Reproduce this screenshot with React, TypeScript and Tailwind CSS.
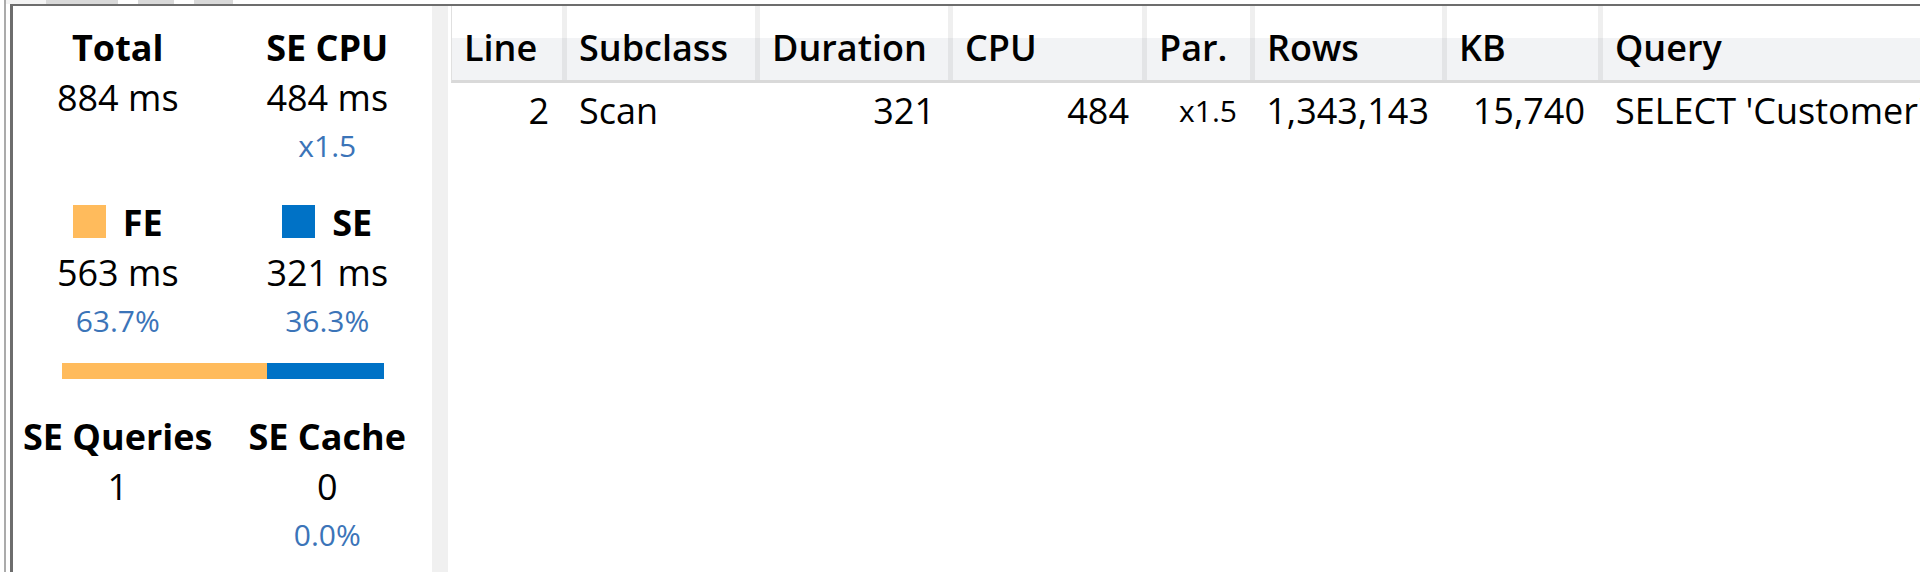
import React from "react";

type Col = {
  name: string;
  w: string;
  val: string;
  right: boolean;
  small?: boolean;
  last?: boolean;
};

const cols: Col[] = [
  { name: "Line", w: "w-[115px]", val: "2", right: true },
  { name: "Subclass", w: "w-[193px]", val: "Scan", right: false },
  { name: "Duration", w: "w-[193px]", val: "321", right: true },
  { name: "CPU", w: "w-[194px]", val: "484", right: true },
  { name: "Par.", w: "w-[108px]", val: "x1.5", right: true, small: true },
  { name: "Rows", w: "w-[192px]", val: "1,343,143", right: true },
  { name: "KB", w: "w-[156px]", val: "15,740", right: true },
  {
    name: "Query",
    w: "flex-1 min-w-0",
    val: "SELECT 'Customer'[CustomerKey], 'Customer'[Name] FROM 'Customer';",
    right: false,
    last: true,
  },
];

function LeftPanel() {
  const title = "leading-[50px] text-[36px] font-bold text-black";
  const value = "leading-[50px] text-[36px] text-black";
  const sub = "h-[46px] leading-[46px] text-[30px] text-[#3b74b8]";
  return (
    <div className="w-[419px] shrink-0 flex flex-col pt-[17px]">
      <div className="grid grid-cols-2 text-center">
        <div className={title}>Total</div>
        <div className={title}>SE CPU</div>
        <div className={value}>884 ms</div>
        <div className={value}>484 ms</div>
        <div className={sub}></div>
        <div className={sub}>x1.5</div>
      </div>
      <div className="grid grid-cols-2 text-center mt-[29px]">
        <div className={`${title} flex items-center justify-center gap-[17px]`}>
          <span className="w-[33px] h-[33px] bg-[#ffbb5c] mt-[-3px]" />
          <span>FE</span>
        </div>
        <div className={`${title} flex items-center justify-center gap-[17px]`}>
          <span className="w-[33px] h-[33px] bg-[#0072c6] mt-[-3px]" />
          <span>SE</span>
        </div>
        <div className={value}>563 ms</div>
        <div className={value}>321 ms</div>
        <div className={sub}>63.7%</div>
        <div className={sub}>36.3%</div>
      </div>
      <div className="mt-[19px] mx-auto w-[322px] h-[16px] flex">
        <div className="w-[205px] bg-[#ffbb5c]" />
        <div className="flex-1 bg-[#0072c6]" />
      </div>
      <div className="grid grid-cols-2 text-center mt-[33px]">
        <div className={`${title} whitespace-nowrap`}>SE Queries</div>
        <div className={`${title} whitespace-nowrap`}>SE Cache</div>
        <div className={value}>1</div>
        <div className={value}>0</div>
        <div className={sub}></div>
        <div className={sub}>0.0%</div>
      </div>
    </div>
  );
}

function Table() {
  return (
    <div className="flex-1 min-w-0 flex flex-col pl-[3px]">
      <div className="flex h-[77px] border-l border-[#e0e0e0] border-b-[3px] border-b-[#d9d9d9] bg-[linear-gradient(to_bottom,#ffffff_0px,#ffffff_32px,#f2f3f5_32px,#f2f3f5_100%)]">
        {cols.map((c) => (
          <div key={c.name} className={`${c.w} shrink-0 flex h-full`}>
            <div className="flex-1 min-w-0 pl-[12px] pt-[17px] leading-[50px] text-[36px] font-semibold text-black whitespace-nowrap">
              {c.name}
            </div>
            {!c.last && (
              <div className="w-[5px] h-full bg-[linear-gradient(to_bottom,#efefef_0px,#efefef_32px,#e3e4e6_32px,#e3e4e6_100%)]" />
            )}
          </div>
        ))}
      </div>
      <div className="flex pt-[3px] border-l border-white">
        {cols.map((c) => (
          <div
            key={c.name}
            className={`${c.w} shrink-0 h-[50px] flex items-center overflow-hidden whitespace-nowrap text-black ${
              c.right ? "justify-end pr-[18px]" : "justify-start pl-[12px]"
            } ${c.small ? "text-[30px] leading-[50px]" : "text-[36px] leading-[50px]"}`}
          >
            {c.val}
          </div>
        ))}
      </div>
    </div>
  );
}

export default function App() {
  return (
    <div className="w-[1920px] h-[572px] bg-white overflow-hidden flex font-['Open_Sans','Noto_Sans',sans-serif]">
      <div className="w-[4px] shrink-0" />
      <div className="w-[2px] shrink-0 bg-[#ababab]" />
      <div className="flex-1 min-w-0 flex flex-col">
        <div className="h-[4px] shrink-0 flex">
          <div className="w-[40px] bg-[#f4f4f4]" />
          <div className="w-[72px] bg-[#d9d9d9]" />
          <div className="w-[20px]" />
          <div className="w-[36px] bg-[#d9d9d9]" />
          <div className="w-[20px]" />
          <div className="w-[39px] bg-[#d9d9d9]" />
        </div>
        <div className="flex-1 min-h-0 ml-[4px] border-t-2 border-l-[3px] border-[#6d6d6d] flex">
          <LeftPanel />
          <div className="w-[16px] shrink-0 bg-[#f0f0f0]" />
          <Table />
        </div>
      </div>
    </div>
  );
}
